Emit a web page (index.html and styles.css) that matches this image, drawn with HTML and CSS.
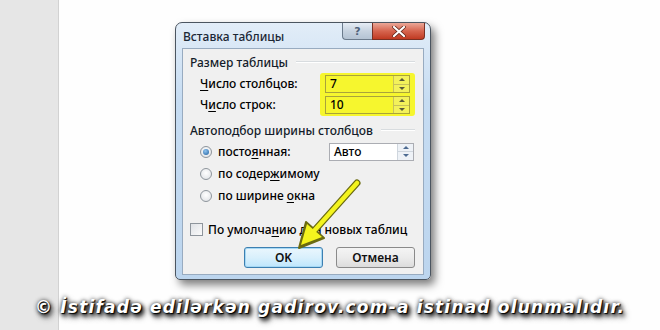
FILE: index.html
```html
<!DOCTYPE html>
<html lang="ru">
<head>
    <meta charset="UTF-8">
    <title>Вставка таблицы</title>
    <link rel="stylesheet" href="styles.css">
</head>
<body>
    <div class="page">
        <div class="strip"></div>

        <div class="stage">
            <div class="dialog">
                <div class="titlebar">
                    <span class="title">Вставка таблицы</span>
                    <div class="controls">
                        <span class="ctl help">?</span>
                        <span class="ctl close">
                            <svg width="14" height="11" viewBox="0 0 14 11">
                                <path d="M2 1 L12 10 M12 1 L2 10" stroke="#5a2418" stroke-width="3.6" stroke-linecap="round"/>
                                <path d="M2 1 L12 10 M12 1 L2 10" stroke="#ffffff" stroke-width="2.2" stroke-linecap="round"/>
                            </svg>
                        </span>
                    </div>
                </div>

                <div class="client">
                    <div class="group-head first"><span>Размер таблицы</span></div>
                    <div class="size-block">
                        <div class="size-labels">
                            <div class="size-label"><u>Ч</u>исло столбцов:</div>
                            <div class="size-label">Ч<u>и</u>сло строк:</div>
                        </div>
                        <div class="highlight">
                            <div class="spin yellow">
                                <span class="val">7</span>
                                <span class="spin-btns"><i class="up"></i><i class="down"></i></span>
                            </div>
                            <div class="spin yellow">
                                <span class="val">10</span>
                                <span class="spin-btns"><i class="up"></i><i class="down"></i></span>
                            </div>
                        </div>
                    </div>

                    <div class="group-head second"><span>Автоподбор ширины столбцов</span></div>
                    <div class="radios">
                        <div class="radio-row">
                            <span class="radio checked"></span>
                            <span class="radio-label">посто<u>я</u>нная:</span>
                            <div class="spin auto">
                                <span class="val">Авто</span>
                                <span class="spin-btns"><i class="up"></i><i class="down"></i></span>
                            </div>
                        </div>
                        <div class="radio-row">
                            <span class="radio"></span>
                            <span class="radio-label">по содер<u>ж</u>имому</span>
                        </div>
                        <div class="radio-row">
                            <span class="radio"></span>
                            <span class="radio-label">по ширине <u>о</u>кна</span>
                        </div>
                    </div>

                    <div class="check-row">
                        <span class="checkbox"></span>
                        <span>По умолча<u>н</u>ию для новых таблиц</span>
                    </div>

                    <div class="buttons">
                        <button class="btn default">OK</button>
                        <button class="btn">Отмена</button>
                    </div>
                </div>
            </div>
        </div>

        <div class="caption">© İstifadə edilərkən gadirov.com-a istinad olunmalıdır.</div>

        <!-- yellow pointer drawn over the dialog -->
        <svg class="arrow" width="660" height="330" viewBox="0 0 660 330">
            <path d="M357 183 L314 231" stroke="#6b6b10" stroke-width="7" stroke-linecap="round"/>
            <polygon points="299,248 306,222 324,238" fill="#6b6b10" stroke="#6b6b10" stroke-width="2" stroke-linejoin="round"/>
            <path d="M357 183 L314 231" stroke="#f4f41e" stroke-width="4.5" stroke-linecap="round"/>
            <polygon points="301,245 307,224 322,237" fill="#f4f41e"/>
        </svg>
    </div>
</body>
</html>
```

FILE: styles.css
```css
* {
    margin: 0;
    padding: 0;
    box-sizing: border-box;
}

body {
    width: 660px;
    height: 330px;
    overflow: hidden;
    background: #fefefe;
    font-family: "Noto Sans", "Open Sans", sans-serif;
    font-size: 12px;
    font-weight: 500;
    color: #000;
}

u {
    text-decoration: underline;
    text-underline-offset: 2px;
}

.page {
    position: relative;
    width: 660px;
    height: 330px;
    display: grid;
    grid-template-columns: 59px 1fr;
    grid-template-rows: 284px 46px;
}

.strip {
    grid-column: 1;
    grid-row: 1 / 3;
    background: #e6e6e6;
    border-right: 1px solid #d2d2d2;
}

.stage {
    grid-column: 2;
    grid-row: 1;
    padding: 22px 0 0 116px;
}

/* window frame */
.dialog {
    width: 256px;
    height: 258px;
    border: 1px solid #4b5560;
    border-radius: 7px 7px 5px 5px;
    background: linear-gradient(#e2edf8, #c6dcf2 30%, #bcd5ee);
    box-shadow: 4px 5px 9px rgba(0, 0, 0, 0.5);
    padding: 0 6px 4px 6px;
    display: flex;
    flex-direction: column;
}

.titlebar {
    height: 25px;
    display: flex;
    align-items: flex-start;
    justify-content: space-between;
}

.title {
    margin: 5px 0 0 1px;
    color: #1b2735;
}

.controls {
    display: flex;
    margin-right: -1px;
}

.ctl {
    height: 17px;
    display: flex;
    align-items: center;
    justify-content: center;
    border: 1px solid #6b7b8c;
    border-top: none;
}

.help {
    width: 30px;
    border-radius: 0 0 0 4px;
    background: linear-gradient(#e6edf5, #c7d3e0 50%, #b4c3d3);
    color: #50627a;
    font-family: "DejaVu Sans", sans-serif;
    font-weight: bold;
    font-size: 11px;
    border-right: none;
}

.close {
    width: 53px;
    border-radius: 0 0 4px 0;
    border-color: #7a3022;
    background: linear-gradient(#eaa797, #d6654f 50%, #c03a22);
}

/* client area */
.client {
    flex: 1;
    background: #f0f0f0;
    border: 1px solid #98abc0;
    padding: 0 8px 0 7px;
}

.group-head {
    display: flex;
    align-items: center;
    height: 16px;
    color: #141c2a;
}

.group-head::after {
    content: "";
    flex: 1;
    margin-left: 8px;
    border-top: 1px solid #d8dcdf;
    border-bottom: 1px solid #ffffff;
}

.group-head.first {
    margin-top: 5px;
}

.group-head.second {
    margin-top: 6px;
}

.size-block {
    display: flex;
    margin-top: 3px;
}

.size-labels {
    width: 135px;
    padding: 2px 0 0 10px;
    display: flex;
    flex-direction: column;
    gap: 3px;
}

.size-label {
    height: 18px;
    line-height: 18px;
}

.highlight {
    width: 95px;
    padding: 2px 5px;
    background: #f6f62e;
    border-radius: 3px;
    display: flex;
    flex-direction: column;
    gap: 3px;
}

/* spin box */
.spin {
    width: 85px;
    height: 18px;
    display: flex;
    border: 1px solid #abadb3;
    background: #fff;
}

.spin .val {
    flex: 1;
    padding-left: 4px;
    line-height: 16px;
}

.spin-btns {
    width: 16px;
    display: flex;
    flex-direction: column;
    border-left: 1px solid #cfd6de;
}

.spin-btns i {
    flex: 1;
    display: flex;
    align-items: center;
    justify-content: center;
    background: #eef2f7;
}

.spin-btns i + i {
    border-top: 1px solid #cfd6de;
}

.spin-btns .up::before,
.spin-btns .down::before {
    content: "";
    border-left: 3px solid transparent;
    border-right: 3px solid transparent;
}

.spin-btns .up::before {
    border-bottom: 3px solid #4d6b92;
}

.spin-btns .down::before {
    border-top: 3px solid #4d6b92;
}

.spin.yellow {
    background: #f6f62e;
    border-color: #a9a33a;
}

.spin.yellow .spin-btns {
    border-left-color: #c8c25a;
}

.spin.yellow .spin-btns i {
    background: #f3f15a;
}

.spin.yellow .spin-btns i + i {
    border-top-color: #c8c25a;
}

.spin.yellow .spin-btns .up::before {
    border-bottom-color: #5a5a3a;
}

.spin.yellow .spin-btns .down::before {
    border-top-color: #5a5a3a;
}

/* radio buttons */
.radios {
    margin-top: 3px;
    display: flex;
    flex-direction: column;
    gap: 1px;
}

.radio-row {
    height: 21px;
    display: flex;
    align-items: center;
    padding-left: 10px;
}

.radio {
    width: 12px;
    height: 12px;
    border-radius: 50%;
    border: 1px solid #8e959c;
    background: radial-gradient(circle at 50% 40%, #ffffff, #dcdfe3);
    display: flex;
    align-items: center;
    justify-content: center;
}

.radio.checked::after {
    content: "";
    width: 6px;
    height: 6px;
    border-radius: 50%;
    background: radial-gradient(circle at 40% 35%, #8fc4f0, #1d5d9c);
}

.radio-label {
    margin-left: 6px;
}

.radio-row .spin.auto {
    margin-left: auto;
    margin-right: 1px;
}

/* checkbox */
.check-row {
    height: 20px;
    margin-top: 13px;
    display: flex;
    align-items: center;
}

.checkbox {
    width: 13px;
    height: 13px;
    border: 1px solid #8e959c;
    background: linear-gradient(135deg, #dfe2e6, #fbfbfb);
    margin-right: 5px;
}

/* dialog buttons */
.buttons {
    margin-top: 8px;
    display: flex;
    justify-content: flex-end;
    gap: 13px;
}

.btn {
    width: 79px;
    height: 21px;
    font-family: "Noto Sans", "Open Sans", sans-serif;
    font-size: 12px;
    font-weight: 600;
    color: #111;
    border: 1px solid #8a8a8a;
    border-radius: 3px;
    background: linear-gradient(#f4f4f4, #ebebeb 50%, #dcdcdc);
}

.btn.default {
    border-color: #3c7fb1;
    box-shadow: inset 0 0 0 1px #a6d8f4;
    background: linear-gradient(#eaf6fd, #d9f0fc 50%, #bee6fd);
}

/* watermark line */
.caption {
    grid-column: 1 / 3;
    grid-row: 2;
    padding: 13px 0 0 35px;
    font-family: "DejaVu Sans", Verdana, sans-serif;
    font-weight: bold;
    font-style: italic;
    font-size: 17px;
    letter-spacing: 1.2px;
    color: #ffffff;
    text-shadow: 1px 1px 1px #000, 2px 3px 4px #111, 0 0 4px #222, 3px 4px 6px #444;
    white-space: nowrap;
}

.arrow {
    position: absolute;
    top: 0;
    left: 0;
    pointer-events: none;
}
```
